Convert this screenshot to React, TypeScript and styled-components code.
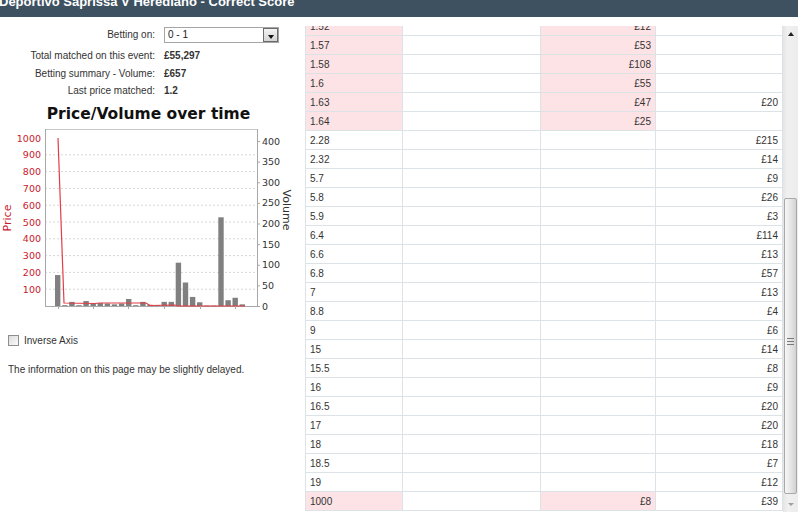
import React from "react";
import styled, { createGlobalStyle } from "styled-components";

const GlobalStyle = createGlobalStyle`
    html, body {
        margin: 0;
        padding: 0;
        background: #fff;
    }
    body {
        font-family: "Liberation Sans", Arial, sans-serif;
        font-size: 10px;
        color: #333;
    }
`;

interface PriceRow {
    price: string;
    back: string;
    lay: string;
    traded: string;
    pink?: boolean;
}

const rows: PriceRow[] = [
    { price: "1.52", back: "", lay: "£12", traded: "", pink: true },
    { price: "1.57", back: "", lay: "£53", traded: "", pink: true },
    { price: "1.58", back: "", lay: "£108", traded: "", pink: true },
    { price: "1.6", back: "", lay: "£55", traded: "", pink: true },
    { price: "1.63", back: "", lay: "£47", traded: "£20", pink: true },
    { price: "1.64", back: "", lay: "£25", traded: "", pink: true },
    { price: "2.28", back: "", lay: "", traded: "£215" },
    { price: "2.32", back: "", lay: "", traded: "£14" },
    { price: "5.7", back: "", lay: "", traded: "£9" },
    { price: "5.8", back: "", lay: "", traded: "£26" },
    { price: "5.9", back: "", lay: "", traded: "£3" },
    { price: "6.4", back: "", lay: "", traded: "£114" },
    { price: "6.6", back: "", lay: "", traded: "£13" },
    { price: "6.8", back: "", lay: "", traded: "£57" },
    { price: "7", back: "", lay: "", traded: "£13" },
    { price: "8.8", back: "", lay: "", traded: "£4" },
    { price: "9", back: "", lay: "", traded: "£6" },
    { price: "15", back: "", lay: "", traded: "£14" },
    { price: "15.5", back: "", lay: "", traded: "£8" },
    { price: "16", back: "", lay: "", traded: "£9" },
    { price: "16.5", back: "", lay: "", traded: "£20" },
    { price: "17", back: "", lay: "", traded: "£20" },
    { price: "18", back: "", lay: "", traded: "£18" },
    { price: "18.5", back: "", lay: "", traded: "£7" },
    { price: "19", back: "", lay: "", traded: "£12" },
    { price: "1000", back: "", lay: "£8", traded: "£39", pink: true },
];

// volume bars, one every ~7px along the time axis
const volumes = [75, 2, 10, 2, 12, 5, 7, 6, 4, 6, 17, 2, 10, 3, 2, 10, 10, 105, 57, 22, 9, 1, 1, 215, 14, 20, 4];

const PLOT_TOP = 6;
const PLOT_BOTTOM = 183;
const PLOT_LEFT = 45;
const PLOT_RIGHT = 257;

const priceY = (p: number) => PLOT_BOTTOM - p * 0.168;
const volY = (v: number) => PLOT_BOTTOM - v * 0.4125;

const priceTicks = [100, 200, 300, 400, 500, 600, 700, 800, 900, 1000];
const volTicks = [0, 50, 100, 150, 200, 250, 300, 350, 400];
const timeTicks = [58, 93, 128, 164, 200, 235];

const pricePath = [
    [58, priceY(1000)],
    [64, 180],
    [95, 180.5],
    [100, 180],
    [146, 180],
    [150, 182.5],
    [175, 182],
    [178, 183],
    [245, 183],
]
    .map((p) => p.join(","))
    .join(" ");

const PriceVolumeChart = () => (
    <ChartSvg width={300} height={195} viewBox="0 0 300 195">
        <rect x={PLOT_LEFT} y={PLOT_TOP} width={PLOT_RIGHT - PLOT_LEFT} height={PLOT_BOTTOM - PLOT_TOP} fill="#fff" />
        {priceTicks.slice(0, 9).map((p) => (
            <line key={p} x1={PLOT_LEFT} x2={PLOT_RIGHT} y1={priceY(p)} y2={priceY(p)} stroke="#d6d6d6" strokeDasharray="2 2" strokeWidth={1} />
        ))}
        <line x1={PLOT_LEFT} x2={PLOT_RIGHT} y1={PLOT_TOP + 0.5} y2={PLOT_TOP + 0.5} stroke="#c8c8c8" />
        <line x1={PLOT_LEFT + 0.5} x2={PLOT_LEFT + 0.5} y1={PLOT_TOP} y2={PLOT_BOTTOM} stroke="#a8a8a8" />
        <line x1={PLOT_RIGHT + 0.5} x2={PLOT_RIGHT + 0.5} y1={PLOT_TOP} y2={PLOT_BOTTOM} stroke="#a8a8a8" />
        <line x1={PLOT_LEFT} x2={PLOT_RIGHT + 1} y1={PLOT_BOTTOM + 0.5} y2={PLOT_BOTTOM + 0.5} stroke="#a8a8a8" />

        {volumes.map((v, i) => {
            const x = 55 + i * 7.1;
            const y = volY(v);
            return <rect key={i} x={x} y={y} width={5.4} height={PLOT_BOTTOM - y} fill="#808080" />;
        })}

        <polyline points={pricePath} fill="none" stroke="#e23d47" strokeWidth={1.2} />

        {timeTicks.map((x) => (
            <line key={x} x1={x + 0.5} x2={x + 0.5} y1={PLOT_BOTTOM} y2={PLOT_BOTTOM + 3} stroke="#a8a8a8" />
        ))}

        {priceTicks.map((p) => (
            <AxisText key={p} x={41} y={priceY(p) + 3.5} textAnchor="end" fill="#c8202e">
                {p}
            </AxisText>
        ))}
        {volTicks.map((v) => (
            <g key={v}>
                <line x1={PLOT_RIGHT} x2={PLOT_RIGHT + 3} y1={volY(v) + 0.5} y2={volY(v) + 0.5} stroke="#a8a8a8" />
                <AxisText x={262} y={volY(v) + 3.5} fill="#333">
                    {v}
                </AxisText>
            </g>
        ))}

        <AxisTitle x={0} y={0} transform="translate(11 95) rotate(-90)" textAnchor="middle" fill="#c8202e">
            Price
        </AxisTitle>
        <AxisTitle x={0} y={0} transform="translate(283 87) rotate(90)" textAnchor="middle" fill="#333">
            Volume
        </AxisTitle>
    </ChartSvg>
);

const App = () => {
    return (
        <>
            <GlobalStyle />
            <TitleBar>
                <Title>Deportivo Saprissa V Herediano - Correct Score</Title>
            </TitleBar>
            <Main>
                <LeftPanel>
                    <InfoGrid>
                        <InfoLabel $top>Betting on:</InfoLabel>
                        <SelectBox>
                            <SelectValue>0 - 1</SelectValue>
                            <SelectButton />
                        </SelectBox>
                        <InfoLabel>Total matched on this event:</InfoLabel>
                        <InfoValue>£55,297</InfoValue>
                        <InfoLabel>Betting summary - Volume:</InfoLabel>
                        <InfoValue>£657</InfoValue>
                        <InfoLabel>Last price matched:</InfoLabel>
                        <InfoValue>1.2</InfoValue>
                    </InfoGrid>

                    <ChartTitle>Price/Volume over time</ChartTitle>
                    <PriceVolumeChart />

                    <CheckRow>
                        <CheckBox />
                        <span>Inverse Axis</span>
                    </CheckRow>
                    <Note>The information on this page may be slightly delayed.</Note>
                </LeftPanel>

                <GridArea>
                    <Viewport>
                        <Table>
                            {rows.map((r) => (
                                <Row key={r.price}>
                                    <Cell $pink={r.pink}>{r.price}</Cell>
                                    <Cell $right>{r.back}</Cell>
                                    <Cell $right $pink={r.pink}>{r.lay}</Cell>
                                    <Cell $right>{r.traded}</Cell>
                                </Row>
                            ))}
                        </Table>
                    </Viewport>
                    <ScrollBar>
                        <ScrollArrow $up />
                        <ScrollTrack>
                            <ScrollThumb>
                                <Grip />
                            </ScrollThumb>
                        </ScrollTrack>
                        <ScrollArrow />
                    </ScrollBar>
                </GridArea>
            </Main>
        </>
    );
};

const TitleBar = styled.header`
    height: 17px;
    background: #3d5161;
    overflow: hidden;
`;

const Title = styled.h1`
    margin: -6px 0 0 -1px;
    font-size: 13px;
    line-height: 15px;
    font-weight: 700;
    color: #fff;
    white-space: nowrap;
`;

const Main = styled.main`
    display: flex;
    padding-top: 9px;
`;

const LeftPanel = styled.section`
    width: 305px;
    flex: none;
    display: flex;
    flex-direction: column;
`;

const InfoGrid = styled.div`
    display: grid;
    grid-template-columns: 155px 1fr;
    grid-template-rows: 20.5px repeat(3, 17.5px);
    column-gap: 9px;
    align-items: center;
    margin-top: 1px;
`;

const InfoLabel = styled.div<{ $top?: boolean }>`
    text-align: right;
    white-space: nowrap;
    color: #333;
    align-self: ${({ $top }) => ($top ? "start" : "center")};
    line-height: ${({ $top }) => ($top ? "16px" : "14px")};
`;

const InfoValue = styled.div`
    font-weight: 700;
    color: #333;
    line-height: 14px;
`;

const SelectBox = styled.div`
    align-self: start;
    box-sizing: border-box;
    width: 115px;
    height: 16px;
    border: 1px solid #a5a5a5;
    background: #fff;
    display: flex;
    align-items: stretch;
`;

const SelectValue = styled.span`
    flex: 1;
    padding-left: 3px;
    line-height: 14px;
    color: #222;
`;

const SelectButton = styled.span`
    width: 15px;
    box-sizing: border-box;
    border: 1px solid #6b6b6b;
    background: linear-gradient(#f3f3f3, #d4d4d4);
    display: flex;
    align-items: center;
    justify-content: center;
    padding-top: 3px;

    &::after {
        content: "";
        border-left: 3.5px solid transparent;
        border-right: 3.5px solid transparent;
        border-top: 4px solid #111;
    }
`;

const ChartTitle = styled.h2`
    margin: 4px 0 0;
    height: 20px;
    line-height: 20px;
    text-align: center;
    font-family: "DejaVu Sans", Verdana, sans-serif;
    font-size: 15.5px;
    font-weight: 700;
    color: #111;
    padding-right: 8px;
`;

const ChartSvg = styled.svg`
    display: block;
    margin-top: -1px;
`;

const AxisText = styled.text`
    font-family: "DejaVu Sans", Verdana, sans-serif;
    font-size: 9.5px;
`;

const AxisTitle = styled.text`
    font-family: "DejaVu Sans", Verdana, sans-serif;
    font-size: 11px;
`;

const CheckRow = styled.label`
    margin-top: 15px;
    height: 14px;
    display: flex;
    align-items: center;
    gap: 5px;
    padding-left: 8px;
    color: #333;
`;

const CheckBox = styled.span`
    width: 11px;
    height: 11px;
    box-sizing: border-box;
    border: 1px solid #8e8e8e;
    background: linear-gradient(135deg, #dcdcdc, #fbfbfb);
`;

const Note = styled.p`
    margin: 16px 0 0;
    padding-left: 8px;
    line-height: 14px;
    color: #333;
`;

const GridArea = styled.div`
    display: flex;
    height: 486px;
    overflow: hidden;
`;

const Viewport = styled.div`
    width: 478px;
    overflow: hidden;
`;

const Table = styled.div`
    margin-top: -9px;
    border-left: 1px solid #dce3e6;
`;

const Row = styled.div`
    display: grid;
    grid-template-columns: 97px 138px 115px 127px;
    align-items: start;
    height: 19px;
    box-sizing: border-box;
    border-bottom: 1px solid #dce3e6;
`;

const Cell = styled.div<{ $pink?: boolean; $right?: boolean }>`
    box-sizing: border-box;
    height: 18px;
    border-right: 1px solid #dce3e6;
    background: ${({ $pink }) => ($pink ? "#fde3e6" : "#fff")};
    text-align: ${({ $right }) => ($right ? "right" : "left")};
    padding: 1px 4px 0;
    line-height: 18px;
    color: #333;
    white-space: nowrap;
`;

const ScrollBar = styled.div`
    width: 15px;
    flex: none;
    display: flex;
    flex-direction: column;
    background: linear-gradient(90deg, #e4e4e4, #f0f0f0 30%, #ececec);
`;

const ScrollArrow = styled.div<{ $up?: boolean }>`
    height: 16px;
    display: flex;
    align-items: center;
    justify-content: center;

    &::after {
        content: "";
        border-left: 3.5px solid transparent;
        border-right: 3.5px solid transparent;
        ${({ $up }) => ($up ? "border-bottom: 4px solid #222;" : "border-top: 3px solid #a0a0a0;")}
    }
`;

const ScrollTrack = styled.div`
    flex: 1;
    display: flex;
    flex-direction: column;
    justify-content: flex-end;
    padding-bottom: 2px;
`;

const ScrollThumb = styled.div`
    height: 296px;
    margin: 0 1px;
    box-sizing: border-box;
    border: 1px solid #a8a8a8;
    border-radius: 2px;
    background: linear-gradient(90deg, #f7f7f7, #e4e4e4 55%, #d2d2d2);
    display: flex;
    align-items: center;
    justify-content: center;
    padding-bottom: 9px;
`;

const Grip = styled.span`
    width: 7px;
    height: 5px;
    border-top: 1px solid #7a7a7a;
    border-bottom: 1px solid #7a7a7a;
    position: relative;

    &::after {
        content: "";
        position: absolute;
        left: 0;
        right: 0;
        top: 2px;
        border-top: 1px solid #7a7a7a;
    }
`;

export default App;
